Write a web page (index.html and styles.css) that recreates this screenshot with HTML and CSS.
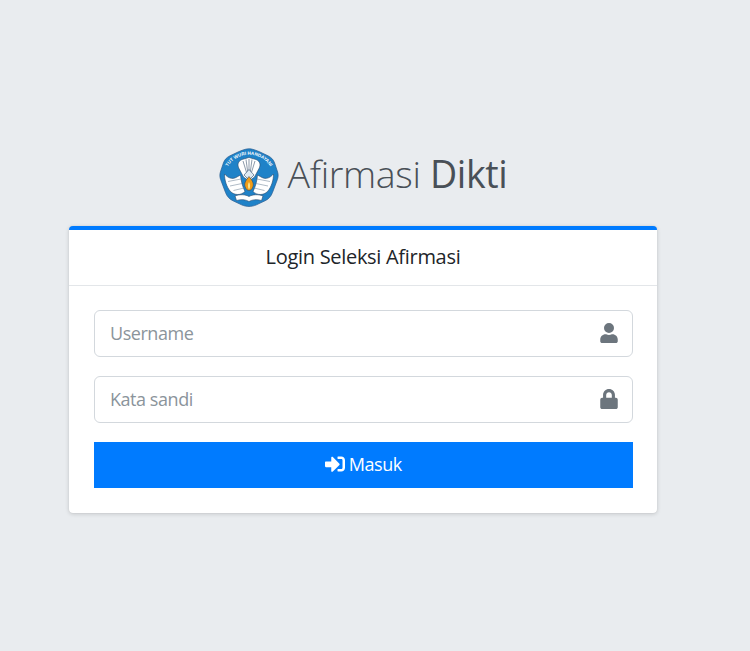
FILE: index.html
```html
<!DOCTYPE html>
<html lang="id">
<head>
<meta charset="utf-8">
<title>Afirmasi Dikti</title>
<link rel="stylesheet" href="styles.css">
</head>
<body>
<main class="login-box">
  <div class="brand">
    <svg class="brand-logo" viewBox="0 0 60 60" aria-hidden="true">
      <path d="M30 .8C33.500 .8 37 2.300 41 4L49 7.800C52.500 9.500 54.500 11.800 55.600 15L58.600 24C59.400 26.500 59.300 29 58.400 31.500L53.500 44.500C52 48.500 49.500 51.200 46 52.800L37.500 56.800C32.500 59 27.500 59 22.500 56.800L14 52.800C10.500 51.200 8 48.500 6.500 44.500L1.600 31.500C.7 29 .6 26.500 1.400 24L4.400 15C5.500 11.800 7.500 9.500 11 7.800L19 4C23 2.300 26.500 .8 30 .8Z" fill="#1f82c8" stroke="#2a5c8f" stroke-width=".7"/>
      <defs><path id="arc" d="M7 22A25 25 0 0 1 53 22"/></defs>
      <text class="logo-motto"><textPath href="#arc" startOffset="50%" text-anchor="middle">TUT WURI HANDAYANI</textPath></text>
      <path d="M30 9.500L37 11.500C41 13 42 17 40 20.500L35.500 29L30 33L24.500 29L20 20.500C18 17 19 13 23 11.500Z" fill="#fff" stroke="#2c4a6b" stroke-width=".6"/>
      <path d="M24 13L28 26M27 11.500L29 26M30 11V26M33 11.500L31 26M36 13L32 26" stroke="#5b7087" stroke-width=".7" fill="none"/>
      <path d="M30 21.500L35 27L30 32L25 27Z" fill="#dfeaf3" stroke="#2c4a6b" stroke-width=".6"/>
      <path d="M5.500 26C9 30 13 31.500 17 29.500L21.500 27C22 33 23.500 38.500 26 43.500C22 47.500 15.500 47.500 11.500 43.500C7.500 39 5.500 32 5.500 26Z" fill="#fff" stroke="#2c4a6b" stroke-width=".6"/>
      <path d="M54.500 26C51 30 47 31.500 43 29.500L38.500 27C38 33 36.500 38.500 34 43.500C38 47.500 44.500 47.500 48.500 43.500C52.500 39 54.500 32 54.500 26Z" fill="#fff" stroke="#2c4a6b" stroke-width=".6"/>
      <path d="M9 33.500L22 31M11 38L23 35.500M14.500 42.500L25 40M51 33.500L38 31M49 38L37 35.500M45.500 42.500L35 40" stroke="#7b8da0" stroke-width=".6" fill="none"/>
      <path d="M30 28.500C33.500 32.500 35 35.500 34 38.500C33.400 41 31.500 42.500 30 42.500C28.500 42.500 26.600 41 26 38.500C25 35.500 26.500 32.500 30 28.500Z" fill="#f09c17" stroke="#2c4a6b" stroke-width=".6"/>
      <path d="M30 34C31.500 36 31.500 39.500 30 41.500C28.500 39.500 28.500 36 30 34Z" fill="#fbe38a"/>
      <path d="M16 48C21 46 26.500 46.500 30 48.500C33.500 46.500 39 46 44 48L42.500 52.500C38 51 33.500 51.500 30 53.500C26.500 51.500 22 51 17.500 52.500Z" fill="#fff" stroke="#2c4a6b" stroke-width=".6"/>
    </svg>
    <span class="brand-text"><span class="brand-light">Afirmasi</span> <b class="brand-bold">Dikti</b></span>
  </div>
  <section class="card">
    <header class="card-header">Login Seleksi Afirmasi</header>
    <form class="card-body">
      <label class="field">
        <input class="field-input" type="text" placeholder="Username">
        <svg class="field-icon" viewBox="0 0 448 512" aria-hidden="true"><path d="M224 256a128 128 0 1 0 0-256 128 128 0 0 0 0 256zm89.600 32h-16.700a174.100 174.100 0 0 1-145.800 0h-16.700C60.200 288 0 348.200 0 422.400V464c0 26.500 21.500 48 48 48h352c26.500 0 48-21.500 48-48v-41.600C448 348.200 387.800 288 313.600 288z"/></svg>
      </label>
      <label class="field">
        <input class="field-input" type="password" placeholder="Kata sandi">
        <svg class="field-icon" viewBox="0 0 448 512" aria-hidden="true"><path d="M400 224h-24v-72C376 68.200 307.800 0 224 0S72 68.200 72 152v72H48c-26.500 0-48 21.500-48 48v192c0 26.500 21.500 48 48 48h352c26.500 0 48-21.500 48-48V272c0-26.500-21.500-48-48-48zm-104 0H152v-72c0-39.700 32.300-72 72-72s72 32.300 72 72v72z"/></svg>
      </label>
      <button class="submit" type="button">
        <svg class="submit-icon" viewBox="0 0 512 512" aria-hidden="true"><path d="M416 448h-84c-6.600 0-12-5.400-12-12v-40c0-6.600 5.400-12 12-12h84c17.700 0 32-14.300 32-32V160c0-17.700-14.300-32-32-32h-84c-6.600 0-12-5.400-12-12V76c0-6.600 5.400-12 12-12h84c53 0 96 43 96 96v192c0 53-43 96-96 96zm-47-201L201 79c-15-15-41-4.500-41 17v96H24c-13.300 0-24 10.700-24 24v96c0 13.300 10.700 24 24 24h136v96c0 21.500 26 32 41 17l168-168c9.300-9.400 9.300-24.600 0-34z"/></svg>
        <span>Masuk</span>
      </button>
    </form>
  </section>
</main>
</body>
</html>
```
FILE: styles.css
```css
* { box-sizing: border-box; }
html, body { margin: 0; height: 100%; }
body {
  min-height: 651px;
  background: #e9ecef;
  font-family: "Open Sans", "Noto Sans", sans-serif;
  color: #212529;
  overflow: hidden;
}
.login-box {
  width: 588px;
  margin-left: 69px;
  padding-top: 147.500px;
}
.brand {
  display: flex;
  justify-content: center;
  align-items: center;
  gap: 9px;
  height: 60px;
  margin-bottom: 18.500px;
}
.brand-logo { width: 60px; height: 60px; flex: none; }
.logo-motto { font: 700 4.600px "Liberation Sans", sans-serif; fill: #fff; }
.brand-text { padding-bottom: 9px; font-size: 37.500px; color: #495057; white-space: nowrap; letter-spacing: -.35px; }
.brand-light { font-weight: 300; }
.brand-bold { font-weight: 500; }
.card {
  background: #fff;
  border-top: 4px solid #007bff;
  border-radius: 4px;
  box-shadow: 0 0 1px rgba(0,0,0,.12), 0 1px 4px rgba(0,0,0,.16);
}
.card-header {
  height: 56px;
  display: flex;
  align-items: center;
  justify-content: center;
  padding-bottom: 2px;
  border-bottom: 1px solid #e3e6e9;
  font-size: 20px;
  letter-spacing: -.3px;
}
.card-body {
  display: flex;
  flex-direction: column;
  gap: 19px;
  padding: 24px 24.500px 25px 25px;
}
.field { position: relative; display: block; height: 47px; }
.field-input {
  width: 100%;
  height: 100%;
  padding: 0 50px 2px 15px;
  border: 1px solid #d3d8dd;
  border-radius: 6px;
  background: #fff;
  font: 18px "Open Sans", "Noto Sans", sans-serif;
  letter-spacing: -.45px;
  outline: none;
}
.field-input::placeholder { color: #8b949b; opacity: 1; }
.field-icon {
  position: absolute;
  right: 15px;
  top: 13px;
  width: 18px;
  height: 20px;
  fill: #6c757d;
}
.submit {
  display: flex;
  align-items: center;
  justify-content: center;
  gap: 4px;
  height: 46px;
  padding: 0 0 2px;
  border: 0;
  background: #007bff;
  color: #fff;
  font: 18px "Open Sans", "Noto Sans", sans-serif;
  letter-spacing: -.45px;
}
.submit-icon { width: 20px; height: 20px; fill: #fff; }
```
